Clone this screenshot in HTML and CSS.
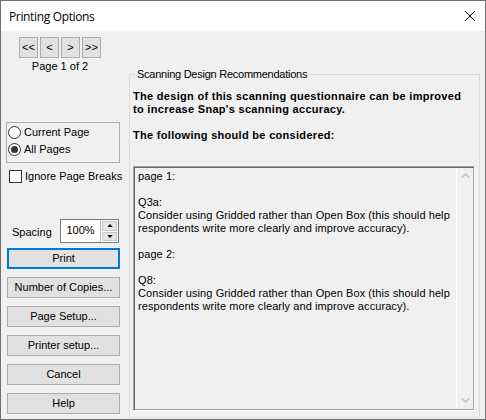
FILE: index.html
```html
<!DOCTYPE html>
<html>
<head>
<meta charset="utf-8">
<link rel="stylesheet" href="styles.css">
</head>
<body>
<div class="window">
  <div class="titlebar">
    <span class="title">Printing Options</span>
    <svg class="close" width="12" height="12" viewBox="0 0 12 12"><path d="M1 1 L11 11 M11 1 L1 11" stroke="#000" stroke-width="1" fill="none"/></svg>
  </div>
  <div class="body">
    <div class="left">
      <div class="nav">
        <button class="navbtn">&lt;&lt;</button>
        <button class="navbtn">&lt;</button>
        <button class="navbtn">&gt;</button>
        <button class="navbtn">&gt;&gt;</button>
      </div>
      <div class="pageinfo">Page 1 of 2</div>
      <div class="radiogroup">
        <label class="opt"><span class="radio"></span>Current Page</label>
        <label class="opt"><span class="radio checked"></span>All Pages</label>
      </div>
      <label class="opt check"><span class="checkbox"></span>Ignore Page Breaks</label>
      <div class="spacing">
        <span class="spacinglabel">Spacing</span>
        <div class="spin">
          <div class="spinvalue">100%</div>
          <div class="spinbtns">
            <div class="spinbtn"><svg width="7" height="4" viewBox="0 0 7 4"><path d="M3.5 0 L7 4 L0 4 Z" fill="#000"/></svg></div>
            <div class="spinbtn"><svg width="7" height="4" viewBox="0 0 7 4"><path d="M0 0 L7 0 L3.5 4 Z" fill="#000"/></svg></div>
          </div>
        </div>
      </div>
      <button class="btn default">Print</button>
      <button class="btn">Number of Copies...</button>
      <button class="btn">Page Setup...</button>
      <button class="btn">Printer setup...</button>
      <button class="btn">Cancel</button>
      <button class="btn">Help</button>
    </div>
    <fieldset class="group">
      <legend>Scanning Design Recommendations</legend>
      <p class="bold">The design of this scanning questionnaire can be improved to increase Snap's scanning accuracy.</p>
      <p class="bold">The following should be considered:</p>
      <div class="textbox">
        <div class="text">page 1:<br><br>Q3a:<br>Consider using Gridded rather than Open Box (this should help respondents write more clearly and improve accuracy).<br><br>page 2:<br><br>Q8:<br>Consider using Gridded rather than Open Box (this should help respondents write more clearly and improve accuracy).</div>
        <div class="scrollbar">
          <svg width="9" height="6" viewBox="0 0 9 6"><path d="M0.5 5 L4.5 1 L8.5 5" stroke="#c2c2c2" stroke-width="1.5" fill="none"/></svg>
          <svg width="9" height="6" viewBox="0 0 9 6"><path d="M0.5 1 L4.5 5 L8.5 1" stroke="#c2c2c2" stroke-width="1.5" fill="none"/></svg>
        </div>
      </div>
    </fieldset>
  </div>
</div>
</body>
</html>
```
FILE: styles.css
```css
* { box-sizing: border-box; }
html, body { margin: 0; padding: 0; }
body { background: #f0f0f0; font-family: "Liberation Sans", Arial, sans-serif; font-size: 11px; line-height: 13px; color: #000; }

.window { width: 486px; height: 420px; border: 1px solid #707070; display: flex; flex-direction: column; background: #f0f0f0; }
.titlebar { height: 30px; background: #fff; display: flex; align-items: center; justify-content: space-between; padding: 0 9px 0 8px; flex: none; }
.title { font-family: "Open Sans", "Noto Sans", sans-serif; font-size: 12px; letter-spacing: -0.35px; }

.body { flex: 1; display: flex; }
.left { width: 128px; flex: none; display: flex; flex-direction: column; align-items: flex-start; }

.nav { display: flex; gap: 2px; margin: 6px 0 0 18px; }
.navbtn { width: 19px; height: 21px; padding: 0; border: 1px solid #adadad; background: #e1e1e1; font: inherit; font-size: 11px; color: #000; }
.pageinfo { width: 82px; margin: 2px 0 0 18px; text-align: center; }

.radiogroup { margin: 49px 0 0 5px; width: 114px; height: 41px; border: 1px solid #adadad; padding: 3px 0 0 1px; display: flex; flex-direction: column; gap: 4px; }
.opt { display: flex; align-items: center; gap: 3px; height: 13px; }
.radio { width: 13px; height: 13px; border: 1px solid #333; border-radius: 50%; background: #fff; display: inline-flex; align-items: center; justify-content: center; }
.radio.checked::after { content: ""; width: 7px; height: 7px; border-radius: 50%; background: #333; }
.check { margin: 7px 0 0 8px; }
.checkbox { width: 13px; height: 13px; border: 1px solid #333; background: #fff; }

.spacing { display: flex; align-items: center; margin: 36px 0 0 11px; }
.spacinglabel { width: 48px; padding-top: 3px; }
.spin { display: flex; height: 24px; border: 1px solid #7a7a7a; background: #fff; }
.spinvalue { width: 40px; text-align: center; line-height: 21px; border-right: 1px solid #bdbdbd; }
.spinbtns { width: 17px; display: flex; flex-direction: column; padding: 1px; gap: 1px; }
.spinbtn { flex: 1; background: #e5e5e5; border: 1px solid #c9c9c9; display: flex; align-items: center; justify-content: center; }
.spinbtn svg { width: 6px; height: 3px; }

.btn { width: 113px; height: 21px; margin: 5px 0 0 6px; padding: 0; border: 1px solid #adadad; background: #e1e1e1; font: inherit; color: #000; }
.btn + .btn { margin-top: 8px; }
.btn.default { border: 2px solid #0078d7; }

.group { margin: 37px 0 0 0; width: 351px; height: 350px; border: 1px solid #dcdcdc; padding: 0 0 0 3px; display: flex; flex-direction: column; }
.group legend { padding: 0 2px; margin-left: 2px; font-size: 11px; line-height: 13px; letter-spacing: -0.25px; }
.bold { font-weight: bold; margin: 9px 0 0 0; font-size: 11px; width: 342px; letter-spacing: 0.3px; }
.bold + .bold { margin-top: 13px; }
.textbox { margin-top: 24px; width: 342px; height: 245px; border: 1px solid; border-color: #a0a0a0 #fff #fff #a0a0a0; box-shadow: inset 1px 1px #696969, inset -1px -1px #a0a0a0; display: flex; padding: 3px 1px 1px 4px; }
.text { flex: 1; letter-spacing: 0.08px; }
.scrollbar { width: 17px; border-left: 1px solid #fff; display: flex; flex-direction: column; justify-content: space-between; align-items: center; padding: 5px 0 6px; margin: -2px 0 0; }
```
